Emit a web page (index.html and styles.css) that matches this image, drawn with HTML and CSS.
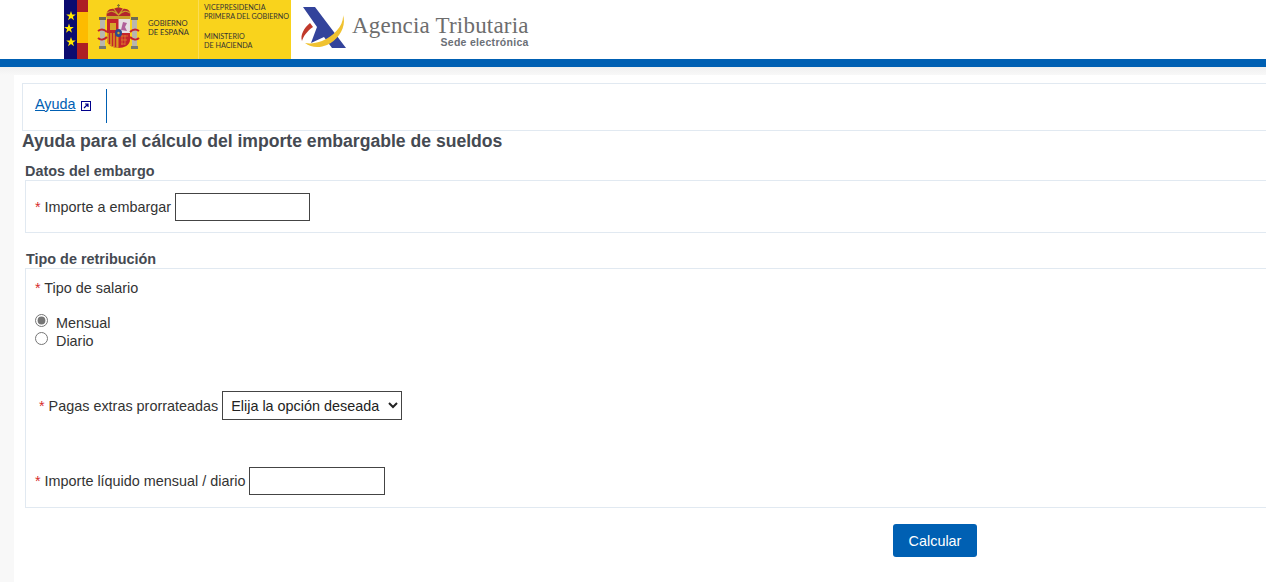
FILE: index.html
```html
<!DOCTYPE html>
<html lang="es">
<head>
  <meta charset="UTF-8">
  <title>Ayuda para el cálculo del importe embargable de sueldos</title>
  <link rel="stylesheet" href="styles.css">
</head>
<body>
  <header class="site-header">
    <div class="gov-logo">
      <div class="eu-band">
        <svg width="13" height="59" viewBox="0 0 13 59">
          <polygon fill="#ffe800" points="7,11 8.200,14.400 11.800,14.500 8.900,16.700 10,20.200 7,18.100 4,20.200 5.100,16.700 2.200,14.500 5.800,14.400"/>
          <polygon fill="#ffe800" points="5,23.500 6.200,26.900 9.800,27 6.900,29.200 8,32.700 5,30.600 2,32.700 3.100,29.200 0.200,27 3.800,26.900"/>
          <polygon fill="#ffe800" points="7,37 8.200,40.400 11.800,40.500 8.900,42.700 10,46.200 7,44.100 4,46.200 5.100,42.700 2.200,40.500 5.800,40.400"/>
        </svg>
      </div>
      <div class="flag-band"></div>
      <div class="gov-main">
        <svg class="arms" width="44" height="48" viewBox="0 0 44 48">
          <!-- pillars -->
          <rect x="3" y="16" width="5" height="27" fill="#b9b6ad"/>
          <rect x="35" y="16" width="5" height="27" fill="#b9b6ad"/>
          <rect x="2" y="13" width="7" height="3" fill="#6f6a55"/>
          <rect x="34" y="13" width="7" height="3" fill="#6f6a55"/>
          <rect x="2" y="42" width="7" height="3" fill="#77796f"/>
          <rect x="34" y="42" width="7" height="3" fill="#77796f"/>
          <!-- crown -->
          <path d="M10 14 C8 7 13 4 17 5 C19 3 24 3 26 5 C30 4 35 7 33 14 Z" fill="#b3262c"/>
          <path d="M10 9 C14 6 17 7 21.500 11 C26 7 29 6 33 9 M17 5 L21.500 11 L26 5" fill="none" stroke="#c9a12c" stroke-width="1.200"/>
          <rect x="10" y="12" width="23" height="3" fill="#c9a12c"/>
          <path d="M21.500 0 V4 M20 1.500 H23" stroke="#8a7a2a" stroke-width="1.200"/>
          <!-- shield -->
          <path d="M10 15 H33 V36 C33 41 27 44 21.500 44 C16 44 10 41 10 36 Z" fill="#c4232b"/>
          <rect x="21.500" y="15" width="11.500" height="14" fill="#e6dfe2"/>
          <path d="M24 26 L26 18 L30 19 L28 23 L30 27 Z" fill="#b0609a"/>
          <rect x="13" y="19" width="6" height="7" fill="#d6a52a"/>
          <path d="M10 29 H21.500 V44 C16 44 10 41 10 36 Z" fill="#d99a1f"/>
          <path d="M12.500 29 V40 M15.500 29 V42 M18.500 29 V43" stroke="#c4232b" stroke-width="1.500"/>
          <path d="M24 32 H31 M24 36 H30 M24 40 H28 M25 31 V41 M28 31 V41" stroke="#e0812f" stroke-width="0.800"/>
          <ellipse cx="21.500" cy="29" rx="3.500" ry="4" fill="#2c4a8f"/>
          <circle cx="21.500" cy="29" r="1.200" fill="#d6a52a"/>
          <!-- ribbons -->
          <path d="M1 27 C5 24 8 26 10 28 M1 34 C4 37 8 35 10 33 M42 27 C38 24 35 26 33 28 M42 34 C39 37 35 35 33 33" fill="none" stroke="#c4232b" stroke-width="2"/>
        </svg>
        <div class="gov-name">GOBIERNO<br>DE ESPAÑA</div>
      </div>
      <div class="gov-ministry">
        <div>VICEPRESIDENCIA<br>PRIMERA DEL GOBIERNO</div>
        <div>MINISTERIO<br>DE HACIENDA</div>
      </div>
    </div>
    <div class="aeat-logo">
      <svg width="46" height="42" viewBox="0 0 46 42">
        <polygon points="3,0 15,0 46,41 32,41 24,30 11,36 17,20" fill="#33439b"/>
        <path d="M10 16 C4 21 0 28 2 34 C3 30 7 24 13 20 Z" fill="#c0392b"/>
        <path d="M43 8 C44 18 34 29 22 34 C16 36 11 37 5 36 C11 41 20 41 27 38 C38 33 47 20 43 8 Z" fill="#f0c230"/>
      </svg>
      <div class="aeat-text">
        <div class="aeat-name">Agencia Tributaria</div>
        <div class="aeat-sub">Sede electrónica</div>
      </div>
    </div>
  </header>
  <div class="blue-bar"></div>

  <div class="page">
    <main class="card">
      <nav class="help-nav">
        <a class="help-link" href="#">Ayuda</a>
        <svg class="ext-icon" width="10" height="10" viewBox="0 0 10 10">
          <rect x="0.500" y="0.500" width="9" height="9" fill="#fff" stroke="#00008b"/>
          <path d="M3 7 L7 3 M4 3 H7 V6" fill="none" stroke="#00008b" stroke-width="1.200"/>
        </svg>
        <span class="help-sep"></span>
      </nav>

      <h1>Ayuda para el cálculo del importe embargable de sueldos</h1>

      <h2 class="legend">Datos del embargo</h2>
      <section class="box box-datos">
        <label class="field"><span class="req">*</span> Importe a embargar <input class="text-input" type="text"></label>
      </section>

      <h2 class="legend legend-tipo">Tipo de retribución</h2>
      <section class="box box-tipo">
        <div class="field salary-title"><span class="req">*</span> Tipo de salario</div>
        <div class="radios">
          <label class="radio"><input type="radio" name="salario" checked> Mensual</label>
          <label class="radio"><input type="radio" name="salario"> Diario</label>
        </div>
        <label class="field field-pagas"><span class="req">*</span> Pagas extras prorrateadas
          <select class="select-input">
            <option>Elija la opción deseada</option>
          </select>
        </label>
        <label class="field field-liquido"><span class="req">*</span> Importe líquido mensual / diario <input class="text-input text-input-small" type="text"></label>
      </section>

      <div class="actions">
        <button class="btn" type="button">Calcular</button>
      </div>
    </main>
  </div>
</body>
</html>
```

FILE: styles.css
```css
html, body {
  margin: 0;
  height: 582px;
  overflow: hidden;
}
body {
  font-family: "Liberation Sans", Arial, sans-serif;
  font-size: 14.4px;
  color: #333;
  background: #fff;
}

/* header */
.site-header {
  display: flex;
  height: 59px;
  padding-left: 64px;
}
.gov-logo {
  display: flex;
  width: 227px;
  height: 59px;
  background: #f9d31c;
}
.eu-band {
  width: 13px;
  background: #0b0b70;
}
.eu-band svg {
  display: block;
}
.flag-band {
  width: 11px;
  background: linear-gradient(#ad1f24 0 12px, #fdbb00 12px 43px, #ad1f24 43px);
}
.gov-main {
  display: flex;
  width: 111px;
  padding-left: 9px;
  box-sizing: border-box;
  border-right: 1px solid #fbdc55;
}
.arms {
  flex: none;
  margin-top: 4px;
}
.gov-name {
  margin: 19px 0 0 7px;
  font-family: Lato, "Liberation Sans", sans-serif;
  font-size: 7.6px;
  line-height: 9px;
  color: #333;
}
.gov-ministry {
  display: flex;
  flex-direction: column;
  gap: 11px;
  padding: 3px 0 0 5px;
  font-family: Lato, "Liberation Sans", sans-serif;
  font-size: 7.2px;
  line-height: 9px;
  color: #333;
  white-space: nowrap;
}
.aeat-logo {
  display: flex;
  margin-left: 9px;
}
.aeat-logo svg {
  margin-top: 7px;
}
.aeat-text {
  margin-left: 6px;
  padding-top: 15px;
  text-align: right;
}
.aeat-name {
  font-family: "Liberation Serif", serif;
  font-size: 23px;
  line-height: 22px;
  letter-spacing: 0.2px;
  color: #6d6d6d;
}
.aeat-sub {
  font-size: 10.5px;
  line-height: 10px;
  letter-spacing: 0.3px;
  font-weight: bold;
  color: #6b6f76;
}
.blue-bar {
  height: 8px;
  background: #0060b3;
}

/* page */
.page {
  height: 515px;
  padding: 8px 0 0 14px;
  box-sizing: border-box;
  background: linear-gradient(#f0f0f0, #f8f8f8 8px);
}
.card {
  height: 507px;
  padding: 8px 0 0 8px;
  box-sizing: border-box;
  background: #fff;
}

.help-nav {
  display: flex;
  align-items: center;
  height: 48px;
  margin-right: -10px;
  padding: 0 0 3px 12px;
  box-sizing: border-box;
  border: 1px solid #e1e9f1;
}
.help-link {
  margin-bottom: 4px;
  color: #0060b3;
  text-decoration: underline;
}
.ext-icon {
  margin-left: 5px;
}
.help-sep {
  width: 1px;
  height: 34px;
  margin-left: 15px;
  background: #0060b3;
}

h1 {
  margin: 0;
  font-size: 17.6px;
  line-height: 20px;
  color: #454a52;
}
.legend {
  margin: 12px 0 0 3px;
  font-size: 14.4px;
  line-height: 17px;
  color: #454a52;
}
.legend-tipo {
  margin: 18px 0 0 4px;
}
.box {
  margin: 0 -10px 0 3px;
  border: 1px solid #e1e9f1;
  box-sizing: border-box;
}
.box-datos {
  height: 53px;
  padding: 12px 0 0 9px;
}
.box-tipo {
  height: 240px;
  padding: 11px 0 0 9px;
}

.field {
  color: #333;
}
.req {
  color: #d62b2b;
}
.text-input {
  width: 135px;
  height: 28px;
  margin: 0;
  padding: 0 4px;
  box-sizing: border-box;
  border: 1px solid #444;
  font: inherit;
  background: #fff;
}
.text-input-small {
  width: 136px;
}
.salary-title {
  line-height: 17px;
}
.radios {
  margin-top: 16px;
}
.radio {
  display: block;
  height: 18px;
  line-height: 20px;
}
.radio input {
  width: 13px;
  height: 13px;
  margin: 0 4px 0 0;
  accent-color: #757575;
  vertical-align: 1px;
}
.field-pagas {
  display: block;
  margin: 42px 0 0 4px;
}
.select-input {
  width: 180px;
  height: 29px;
  padding: 0 4px;
  border: 1px solid #444;
  border-radius: 0;
  font: inherit;
  color: #222;
  background: #fff;
}
.field-liquido {
  display: block;
  margin-top: 47px;
}

.actions {
  margin-top: 16px;
  padding-left: 871px;
}
.btn {
  width: 84px;
  height: 33px;
  border: 0;
  border-radius: 3px;
  font: inherit;
  color: #fff;
  background: #0060b3;
}
```
